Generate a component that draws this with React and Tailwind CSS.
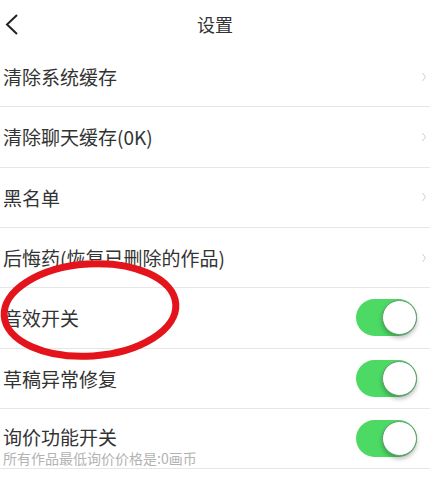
import React from "react";

const font = { fontFamily: '"Noto Sans CJK SC", "Noto Sans", sans-serif' };

const rows = [
  { title: "清除系统缓存", type: "link" },
  { title: "清除聊天缓存(0K)", type: "link" },
  { title: "黑名单", type: "link" },
  { title: "后悔药(恢复已删除的作品)", type: "link" },
  { title: "音效开关", type: "toggle" },
  { title: "草稿异常修复", type: "toggle" },
  { title: "询价功能开关", type: "toggle", sub: "所有作品最低询价价格是:0画币" },
];

const Chevron = () => (
  <svg width="6" height="10" viewBox="0 0 6 10" className="mr-[3px]">
    <polyline points="1.5,1 4.5,5 1.5,9" fill="none" stroke="#cfcfcf" strokeWidth="1" />
  </svg>
);

const Toggle = () => (
  <div className="relative w-[61px] h-[37px] rounded-full bg-[#4cd964] mr-[13px]">
    <div className="absolute right-0 top-[1px] w-[35px] h-[35px] rounded-full bg-white border border-[#5f9a6e] shadow-[0_3px_4px_rgba(0,0,0,0.25)]" />
  </div>
);

export default function App() {
  return (
    <div className="relative w-[439px] h-[489px] bg-white overflow-hidden text-[#333]" style={font}>
      {/* HEADER */}
      <div className="relative h-[47px] flex items-center justify-center pr-[9px]">
        <svg width="24" height="40" viewBox="0 0 24 40" className="absolute left-0 top-[4px]">
          <polyline points="17,11 7,20.5 17,30" fill="none" stroke="#222" strokeWidth="2" />
        </svg>
        <span className="text-[18px] leading-none">设置</span>
      </div>

      {/* LIST */}
      <div className="w-[430px]">
        {rows.map((r) => (
          <div key={r.title} className="h-[60.33px] border-b border-[#e6e6e6] flex items-center justify-between pl-[3px]">
            {r.sub ? (
              <div className="flex flex-col pt-[16px]">
                <span className="text-[19px] leading-[22px]">{r.title}</span>
                <span className="text-[14px] leading-[18px] text-[#b3b3b3] mt-[1px]">{r.sub}</span>
              </div>
            ) : (
              <span className="text-[19px] leading-none">{r.title}</span>
            )}
            {r.type === "link" ? <Chevron /> : <Toggle />}
          </div>
        ))}
      </div>

      {/* RED ANNOTATION */}
      <svg width="439" height="489" className="absolute left-0 top-0 pointer-events-none">
        <ellipse cx="90" cy="310" rx="86" ry="46" transform="rotate(-4 90 310)" fill="none" stroke="#e3141b" strokeWidth="7" />
      </svg>
    </div>
  );
}
